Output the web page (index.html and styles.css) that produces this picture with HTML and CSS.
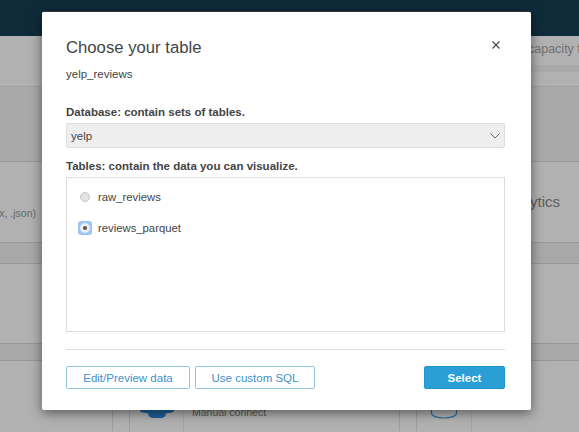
FILE: index.html
```html
<!DOCTYPE html>
<html lang="en">

<head>
  <meta charset="UTF-8">
  <title>Choose your table</title>
  <link rel="stylesheet" href="styles.css">
</head>

<body>

  <div class="page">
    <div class="topbar"></div>
    <div class="notice">capacity for this region</div>
    <div class="notice-bar"></div>
    <div class="notice-foot"></div>
    <div class="band-large"></div>
    <div class="sources">
      <div class="file-types">(.csv, .tsv, .clf, .elf, .xlsx, .json)</div>
      <div class="source-name">Analytics</div>
    </div>
    <div class="band"></div>
    <div class="spacer"></div>
    <div class="band band-short"></div>
    <div class="cards">
      <div class="card card-left"></div>
      <div class="card card-middle">
        <svg class="card-icon" width="34" height="60" viewBox="0 0 34 60">
          <path d="M0 50h9v-6h16v6h9v2c0 1-3 2-6 2l-2 .5-1 3-3 1.500h-10l-3-1.500-1-3-2-.5c-3 0-6-1-6-2z" fill="#1f5f99" />
        </svg>
        <div class="card-text">Manual connect</div>
      </div>
      <div class="card card-right">
        <svg class="card-icon" width="28" height="60" viewBox="0 0 28 60">
          <path d="M1.500 44v10c0 3 5.500 5 12.500 5s12.500-2 12.500-5V44" fill="none" stroke="#2b6c9c" stroke-width="1.200" />
        </svg>
      </div>
    </div>
  </div>

  <div class="modal">
    <button class="close" type="button" aria-label="Close">
      <svg width="10" height="10" viewBox="0 0 10 10">
        <path d="M1.500 1.500l7 7M8.500 1.500l-7 7" stroke="#444" stroke-width="1.100" fill="none" />
      </svg>
    </button>

    <h2 class="modal-title">Choose your table</h2>
    <p class="modal-sub">yelp_reviews</p>

    <label class="field-label field-database">Database: contain sets of tables.</label>
    <div class="select">
      <span>yelp</span>
      <svg width="10" height="6" viewBox="0 0 10 6">
        <path d="M.5 .5l4.500 4.500 4.500-4.500" stroke="#666" stroke-width="1" fill="none" />
      </svg>
    </div>

    <label class="field-label field-tables">Tables: contain the data you can visualize.</label>
    <div class="table-list">
      <div class="table-row">
        <span class="radio-wrap"><span class="radio"></span></span>
        <span>raw_reviews</span>
      </div>
      <div class="table-row">
        <span class="radio-wrap radio-focus"><span class="radio radio-on"></span></span>
        <span>reviews_parquet</span>
      </div>
    </div>

    <div class="modal-foot">
      <button class="btn btn-edit" type="button">Edit/Preview data</button>
      <button class="btn btn-sql" type="button">Use custom SQL</button>
      <button class="btn btn-primary" type="button">Select</button>
    </div>
  </div>

</body>

</html>
```

FILE: styles.css
```css
/* page behind the dialog, already dimmed */
html,
body {
  margin: 0;
  height: 100%;
  overflow: hidden;
}

body {
  font-family: "Liberation Sans", Arial, sans-serif;
  background-color: #b1b1b1;
  color: #444;
}

.page {
  height: 432px;
  overflow: hidden;
}

.topbar {
  height: 36px;
  background-color: #0f2b3a;
}

.notice {
  height: 29px;
  line-height: 27px;
  padding-left: 528px;
  font-size: 12.500px;
  color: #6f6f6f;
  white-space: nowrap;
}

.notice-bar {
  height: 7px;
  margin-left: 300px;
  background-color: #a9a9a9;
}

.notice-foot {
  height: 14px;
  border-bottom: 1px solid #a0a0a0;
  background-color: #b1b1b1;
}

.band-large {
  height: 74px;
  background-color: #a9a9a9;
  border-bottom: 1px solid #989898;
}

.sources {
  height: 80px;
  display: flex;
  justify-content: space-between;
  white-space: nowrap;
}

.file-types {
  width: 36px;
  display: flex;
  justify-content: flex-end;
  padding-top: 45px;
  font-size: 10.500px;
  color: #666;
}

.source-name {
  padding-top: 31px;
  padding-right: 19px;
  font-size: 15px;
  color: #5c5c5c;
}

.band {
  height: 20px;
  background-color: #a8a8a8;
  border-top: 1px solid #989898;
  border-bottom: 1px solid #989898;
}

.spacer {
  height: 79px;
}

.band-short {
  height: 16px;
}

.cards {
  display: flex;
  height: 70px;
}

.card {
  display: flex;
  border-right: 1px solid #9c9c9c;
  box-sizing: border-box;
}

.card-left {
  width: 113px;
  margin-right: 16px;
}

.card-middle {
  width: 271px;
  margin-right: 16px;
  border-left: 1px solid #9c9c9c;
  padding-left: 10px;
}

.card-right {
  flex: 1;
  border-left: 1px solid #9c9c9c;
  border-right: none;
  padding-left: 13px;
}

.card-icon {
  flex-shrink: 0;
  margin-top: -2px;
}

.card-text {
  margin-left: 9px;
  padding-left: 8px;
  padding-top: 45px;
  border-left: 1px solid #a4a4a4;
  font-size: 10.500px;
  color: #555;
  white-space: nowrap;
}

.card-right::after {
  content: "";
  margin-left: 13px;
  border-left: 1px solid #a4a4a4;
}

/* dialog */
.modal {
  position: absolute;
  top: 11px;
  left: 42px;
  width: 489px;
  height: 399px;
  box-sizing: border-box;
  padding: 24px 26px 0 24px;
  background-color: #fff;
  border-top: 1px solid #333;
  border-radius: 2px;
  box-shadow: 0 3px 12px rgba(0, 0, 0, 0.5);
}

.close {
  position: absolute;
  top: 28px;
  right: 30px;
  padding: 0;
  border: none;
  background: none;
  line-height: 0;
}

.modal-title {
  margin: 0;
  font-size: 16.700px;
  line-height: 24px;
  font-weight: normal;
  color: #444;
}

.modal-sub {
  margin: 6px 0 0;
  font-size: 11.500px;
  line-height: 16px;
  color: #444;
}

.field-label {
  display: block;
  font-size: 11.500px;
  line-height: 14px;
  font-weight: bold;
  color: #444;
}

.field-database {
  margin-top: 23px;
}

.field-tables {
  margin-top: 11px;
}

.select {
  display: flex;
  align-items: center;
  justify-content: space-between;
  height: 25px;
  box-sizing: border-box;
  margin-top: 4px;
  padding: 0 4px;
  background-color: #eee;
  border: 1px solid #ddd;
  border-radius: 2px;
  font-size: 11.500px;
}

.table-list {
  height: 155px;
  box-sizing: border-box;
  margin-top: 4px;
  padding-top: 9px;
  border: 1px solid #ddd;
}

.table-row {
  display: flex;
  align-items: center;
  gap: 6px;
  height: 19px;
  margin-bottom: 12px;
  padding-left: 11px;
  font-size: 11.300px;
  color: #444;
}

.radio-wrap {
  display: flex;
  align-items: center;
  justify-content: center;
  width: 14px;
  height: 14px;
  border-radius: 3px;
}

.radio-focus {
  background-color: #9cc6f5;
}

.radio {
  width: 10px;
  height: 10px;
  box-sizing: border-box;
  border: 1px solid #c4c4c4;
  border-radius: 50%;
  background-color: #e4e4e4;
}

.radio-on {
  border: 3px solid #eee;
  background-color: #555;
}

.modal-foot {
  display: flex;
  gap: 5px;
  margin-top: 17px;
  padding-top: 16px;
  border-top: 1px solid #ddd;
}

.btn {
  height: 23px;
  padding: 0;
  box-sizing: border-box;
  background-color: #fff;
  border: 1px solid #93c5e8;
  border-radius: 2px;
  font-family: inherit;
  font-size: 11.500px;
  color: #3f90c9;
}

.btn-edit {
  width: 124px;
}

.btn-sql {
  width: 120px;
}

.btn-primary {
  width: 81px;
  margin-left: auto;
  background-color: #2a9fd6;
  border-color: #1f95cf;
  color: #fff;
  font-weight: bold;
}
```
